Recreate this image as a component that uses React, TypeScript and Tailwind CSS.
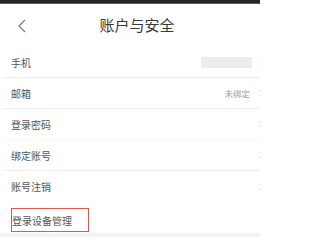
const rows = [
  { label: '手机', right: 'mask' },
  { label: '邮箱', right: '未绑定' },
  { label: '登录密码', right: '' },
  { label: '绑定账号', right: '' },
  { label: '账号注销', right: '' },
];

function Chevron() {
  return (
    <svg width="6" height="8" viewBox="0 0 6 8" className="shrink-0">
      <path d="M1 1l3 3-3 3" fill="none" stroke="#dedede" strokeWidth="1" />
    </svg>
  );
}

export default function App() {
  return (
    <div
      className="w-[260px] h-[237px] overflow-hidden bg-white flex flex-col"
      style={{ fontFamily: '"Noto Sans CJK SC", "Noto Sans", sans-serif' }}
    >
      <div className="h-[4px] bg-[#262626] border-b border-[#5a5a5a] shrink-0" />
      <div className="h-[43px] shrink-0 flex items-center relative">
        <svg width="10" height="14" viewBox="0 0 10 14" className="ml-[17px]">
          <path d="M8 1L2 7l6 6" fill="none" stroke="#777" strokeWidth="1.1" />
        </svg>
        <div className="absolute inset-0 flex items-center justify-center text-[15px] text-[#3a3a3a] pl-[14px]">
          账户与安全
        </div>
      </div>
      {rows.map((r, i) => (
        <div
          key={r.label}
          className={`h-[31px] shrink-0 flex items-center pl-[8px] ml-[3px] ${
            i === 2 ? 'border-b border-[#f8f8f8]' : i < 4 ? 'border-b border-[#eeeeee]' : ''
          }`}
        >
          <span className="text-[10px] text-[#555] flex-1">{r.label}</span>
          {r.right === 'mask' && <div className="w-[51px] h-[11px] bg-[#ededed] mr-[6px]" />}
          {r.right && r.right !== 'mask' && (
            <span className="text-[8.5px] text-[#a0a0a0] mr-[8px]">{r.right}</span>
          )}
          <div className="w-[2px] overflow-hidden">
            <Chevron />
          </div>
        </div>
      ))}
      <div className="h-[31px] shrink-0 flex items-center pl-[11px]">
        <span className="w-[78px] h-[24px] mt-[5px] border border-[#e0574f] flex items-center text-[10px] text-[#555]">
          登录设备管理
        </span>
      </div>
      <div className="flex-1 bg-[#f4f4f4]" />
    </div>
  );
}
